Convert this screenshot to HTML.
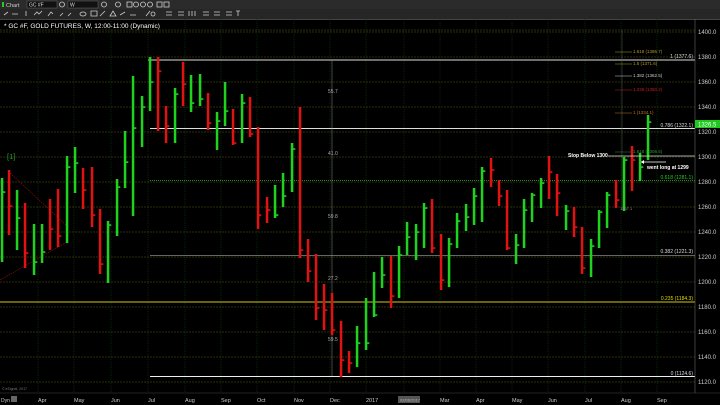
<!DOCTYPE html>
<html><head><meta charset="utf-8"><style>
*{margin:0;padding:0}
body{width:720px;height:405px;background:#000;overflow:hidden;position:relative;font-family:"Liberation Sans",sans-serif}
.tb{position:absolute;left:0;width:720px;background:#2b2b2b;border-bottom:1px solid #444}
svg{position:absolute;left:0;top:0}
</style></head><body>
<div class="tb" style="top:0;height:9px"></div>
<div class="tb" style="top:9px;height:10px;background:#262626"></div>
<svg width="720" height="405" id="s" font-family="Liberation Sans, sans-serif">
<rect x="2" y="2" width="2" height="5" fill="#2c2"/>
<text x="6" y="7" font-size="5.5" fill="#ccc">Chart</text>
<rect x="27" y="1" width="30" height="7" fill="#111" stroke="#666" stroke-width="0.5"/>
<text x="29" y="6.5" font-size="5" fill="#ddd">GC #F</text>
<rect x="68" y="1" width="30" height="7" fill="#111" stroke="#666" stroke-width="0.5"/>
<text x="70" y="6.5" font-size="5" fill="#ddd">W</text>
<g fill="none" stroke="#ccc" stroke-width="0.8">
<circle cx="62" cy="4.5" r="2.5"/><circle cx="104" cy="4.5" r="2.5"/><circle cx="118" cy="4.5" r="2.5"/><circle cx="136" cy="4.5" r="2.5"/><circle cx="143" cy="4.5" r="2.5"/><circle cx="150" cy="4.5" r="2.5"/>
<rect x="127" y="2" width="5" height="5"/><rect x="157" y="2" width="5" height="5"/><rect x="164" y="2" width="5" height="5"/>
<path d="M4 15l4-3M12 14h6M26 11v5M34 15l3-3 2 2 3-3M48 16l3-4 2 2M60 16l3-3M68 16l3-3M80 14a3 2 0 1 0 6 0a3 2 0 1 0-6 0M91 11h6v5h-6zM100 16l5-5M110 16l3-5 3 5zM120 15l5-3M130 15h6M146 16l4-5M151 14a2 2 0 1 0 4 0a2 2 0 1 0-4 0M166 12h6M166 15h6M178 12h6M178 15h6M189 11v5M192 11v5M195 11v5M203 12h6M203 15h6M214 12h6M214 15h6M226 12h6M226 15h6M236 11h4M238 11v5"/>
</g>
</svg>
<script>
var s=document.getElementById('s'),h='';
function Y(p){return 382-(p-1120)*1.25}
var mx=[38,74,111,148,185,221,257,294,330,366,404,440,476,512,548,585,621,657];
mx.forEach(function(x){h+='<line x1="'+x+'" y1="19" x2="'+x+'" y2="393" stroke="#0d3a0d" stroke-width="0.6" stroke-dasharray="1,1"/>'});
for(var p=1120;p<=1400;p+=20){var y=Y(p);h+='<line x1="0" y1="'+y+'" x2="695" y2="'+y+'" stroke="#5a5a12" stroke-width="0.6" stroke-dasharray="2,1"/>';
h+='<text x="698" y="'+(y+2)+'" font-size="6" fill="#ccc">'+p+'.0</text>';}
h+='<line x1="0" y1="30" x2="695" y2="30" stroke="#5a5a12" stroke-width="0.6" stroke-dasharray="2,1"/>';
h+='<line x1="148" y1="60" x2="695" y2="60" stroke="#ddd" stroke-width="1"/>';
h+='<line x1="150" y1="128.5" x2="695" y2="128.5" stroke="#ddd" stroke-width="1"/>';
h+='<line x1="150" y1="180.5" x2="695" y2="180.5" stroke="#2a8a2a" stroke-width="1" stroke-dasharray="1,1"/>';
h+='<line x1="150" y1="255.5" x2="695" y2="255.5" stroke="#888" stroke-width="0.8"/>';
h+='<line x1="0" y1="302" x2="695" y2="302" stroke="#a8a010" stroke-width="1.2"/>';
h+='<line x1="150" y1="376.5" x2="695" y2="376.5" stroke="#eee" stroke-width="1"/>';
h+='<line x1="332" y1="60" x2="332" y2="376" stroke="#888" stroke-width="0.5"/>';
h+='<line x1="622" y1="30" x2="622" y2="210" stroke="#555" stroke-width="0.5"/>';
[[93,'55.7'],[155,'41.0'],[218,'59.8'],[280,'27.2'],[341,'59.5']].forEach(function(a){h+='<text x="328" y="'+a[0]+'" font-size="5" fill="#aaa">'+a[1]+'</text>'});
[[51,'1.618 (1386.7)','#aa9a20',628],[63,'1.5 (1371.6)','#aa9a20',628],[75,'1.382 (1362.5)','#ccc',628],[89,'1.236 (1350.2)','#c02020',628],[112,'1 (1334.1)','#c07020',628],[151,'1.618 (1306.5)','#2a9a2a',628]].forEach(function(a){h+='<line x1="615" y1="'+(a[0]+1)+'" x2="632" y2="'+(a[0]+1)+'" stroke="'+a[2]+'" stroke-width="0.6"/><text x="'+(a[3]+5)+'" y="'+(a[0]+2)+'" font-size="4.5" fill="'+a[2]+'">'+a[1]+'</text>'});
[[58,'1 (1377.6)','#ddd'],[127,'0.786 (1322.1)','#ddd'],[179,'0.618 (1281.1)','#2c2'],[253,'0.382 (1221.3)','#ddd'],[300,'0.235 (1184.3)','#dd0'],[375,'0 (1124.6)','#ddd']].forEach(function(a){h+='<text x="693" y="'+a[0]+'" font-size="5" fill="'+a[2]+'" text-anchor="end">'+a[1]+'</text>'});
h+='<line x1="10" y1="173" x2="66" y2="225" stroke="#a01010" stroke-width="0.6" stroke-dasharray="1.5,1"/>';
h+='<line x1="0" y1="280" x2="67" y2="242" stroke="#a01010" stroke-width="0.6" stroke-dasharray="1.5,1"/>';
h+='<text x="7" y="159" font-size="7.5" fill="#2a9a2a">[1]</text>';
var B=[[2,178,262,192,1],[9,170,235,206,0],[17,190,250,218,1],[25,203,268,253,0],[34,224,275,262,1],[42,224,263,252,1],[50,199,250,229,0],[58,189,247,236,0],[67,156,243,167,1],[75,147,193,163,1],[83,168,209,190,0],[92,167,227,215,0],[100,209,274,264,0],[108,221,283,225,1],[117,179,236,187,1],[125,131,188,162,1],[133,76,216,128,1],[142,96,147,107,1],[150,57,111,82,1],[158,57,131,71,0],[166,106,143,126,0],[175,88,143,94,1],[183,62,106,84,0],[191,75,112,103,1],[200,74,106,99,1],[208,93,130,123,0],[217,112,150,121,1],[225,82,126,111,1],[233,109,145,143,0],[242,94,143,103,1],[250,97,137,134,0],[258,127,229,215,0],[267,197,223,210,0],[275,185,218,215,1],[283,173,207,196,1],[292,143,192,149,1],[300,107,258,250,0],[308,239,282,271,0],[316,254,320,308,0],[324,284,330,310,0],[332,293,335,330,0],[341,321,377,360,0],[349,351,373,363,0],[357,326,367,343,1],[366,298,350,343,1],[374,272,317,315,1],[382,257,288,275,1],[391,256,308,296,0],[399,246,298,255,1],[407,222,255,237,1],[416,224,260,232,1],[424,203,248,208,1],[432,199,253,248,0],[441,234,290,280,0],[449,238,287,244,1],[457,213,248,221,1],[466,204,231,217,1],[474,188,225,196,1],[482,167,222,171,1],[491,158,187,170,0],[499,180,206,196,0],[507,190,250,248,0],[516,234,264,245,1],[524,199,248,210,1],[532,193,222,195,1],[541,178,208,183,1],[549,156,199,172,0],[557,174,216,193,0],[566,205,230,211,1],[574,207,237,227,0],[582,227,274,268,0],[591,239,277,246,1],[599,210,248,212,1],[607,192,228,195,1],[616,180,208,200,0],[624,157,211,160,1],[632,146,191,160,0],[640,153,181,167,1],[648,115,160,122,1]];
B.forEach(function(b){var c=b[4]?'#1ed21e':'#e01212';h+='<rect x="'+(b[0]-1.2)+'" y="'+b[1]+'" width="2.5" height="'+(b[2]-b[1])+'" fill="'+c+'"/><rect x="'+b[0]+'" y="'+(b[3]-0.7)+'" width="3.3" height="1.6" fill="'+c+'"/>'});
h+='<line x1="608" y1="156" x2="695" y2="156" stroke="#ddd" stroke-width="0.8"/>';
h+='<text x="568" y="157" font-size="5" fill="#fff" font-weight="bold">Stop Below 1300</text>';
h+='<line x1="641" y1="162" x2="666" y2="162" stroke="#fff" stroke-width="0.7"/><path d="M641 162l3-2v4z" fill="#fff"/>';
h+='<text x="647" y="169" font-size="5" fill="#fff" font-weight="bold">went long at 1299</text>';
h+='<text x="620" y="210" font-size="4" fill="#888">1257.1</text>';
h+='<text x="4" y="28" font-size="6.5" fill="#fff">* GC #F, GOLD FUTURES, W, 12:00-11:00 (Dynamic)</text>';
h+='<line x1="695" y1="19" x2="695" y2="393" stroke="#666" stroke-width="0.6"/>';
h+='<rect x="695" y="120" width="25" height="8" fill="#1ec81e"/><text x="698" y="126.5" font-size="6" fill="#fff">1326.5</text>';
h+='<rect x="0" y="393" width="720" height="12" fill="#000"/><line x1="0" y1="393" x2="720" y2="393" stroke="#444" stroke-width="0.5"/>';
h+='<text x="2" y="390" font-size="3.5" fill="#777">© eSignal, 2017</text>';
h+='<text x="1" y="402" font-size="5" fill="#ccc">Dyn</text><rect x="11" y="396" width="6" height="6" fill="#666"/>';
var ml=['Apr','May','Jun','Jul','Aug','Sep','Oct','Nov','Dec','2017','','Mar','Apr','May','Jun','Jul','Aug','Sep'];
mx.forEach(function(x,i){if(ml[i])h+='<text x="'+x+'" y="402" font-size="5.5" fill="#ccc">'+ml[i]+'</text>'});
h+='<rect x="398" y="396" width="22" height="7" fill="#555"/><text x="400" y="401.5" font-size="4" fill="#bbb">02/06/2017</text>';
s.insertAdjacentHTML('beforeend',h);
</script>
</body></html>
